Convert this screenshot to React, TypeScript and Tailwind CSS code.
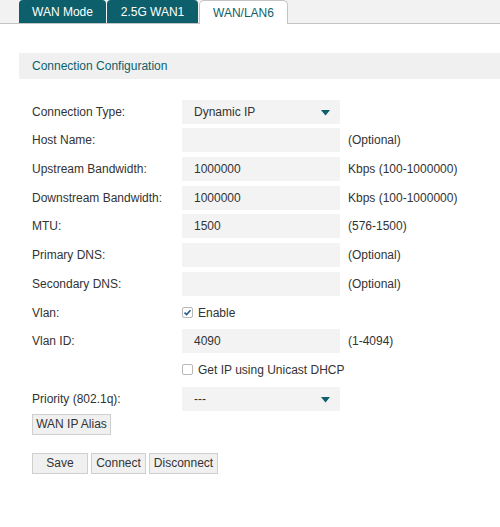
import React from "react";

const TEAL = "text-[#0d5f6b]";

function Arrow() {
  return (
    <svg width="9" height="6" viewBox="0 0 9 6" className="absolute right-[10px] top-[10px]">
      <path d="M0 0 H9 L4.5 5.5 Z" fill="#0d5f6b" />
    </svg>
  );
}

function Check({ checked }: { checked?: boolean }) {
  return (
    <span className="w-[11px] h-[11px] border border-[#b8b8b8] bg-white rounded-[2px] flex items-center justify-center">
      {checked && (
        <svg width="9" height="9" viewBox="0 0 9 9">
          <path d="M1.5 4.6 L3.6 6.6 L7.5 2.2" stroke="#2b5a8a" strokeWidth="1.6" fill="none" />
        </svg>
      )}
    </span>
  );
}

function Row({ label, children, note }: { label?: string; children?: React.ReactNode; note?: string }) {
  return (
    <div className="flex items-center h-[28.7px]">
      <div className="w-[150px] shrink-0">{label}</div>
      {children}
      {note && <div className="ml-[8px]">{note}</div>}
    </div>
  );
}

function Field({ value, select }: { value?: string; select?: boolean }) {
  return (
    <div className="relative w-[158px] h-[24px] bg-[#f3f3f3] flex items-center pl-[12px]">
      {value}
      {select && <Arrow />}
    </div>
  );
}

function Btn({ children, w }: { children: React.ReactNode; w: string }) {
  return (
    <button className={`${w} h-[21px] bg-[#f0f0f0] border border-[#cfcfcf] text-[#333] flex items-center justify-center`}>
      {children}
    </button>
  );
}

export default function App() {
  return (
    <div className="w-[500px] h-[527px] bg-white text-[12px] text-[#333]" style={{ fontFamily: '"Liberation Sans", Arial, sans-serif' }}>
      <div className="h-[24px] bg-[#f2f2f2] border-b border-[#c4c4c4] flex items-end pl-[19px]">
        <div className="w-[87px] h-[23px] bg-[#0d5f6b] text-white rounded-t-[4px] flex items-center justify-center">WAN Mode</div>
        <div className="w-[91px] h-[23px] ml-[1px] bg-[#0d5f6b] text-white rounded-t-[4px] flex items-center justify-center">2.5G WAN1</div>
        <div className={`w-[89px] h-[24px] ml-[1px] mb-[-1px] bg-white border border-b-0 border-[#c4c4c4] rounded-t-[5px] flex items-center justify-center ${TEAL}`}>WAN/LAN6</div>
      </div>

      <div className={`mt-[29px] ml-[19px] h-[26px] bg-[#f0f0f0] flex items-center pl-[13px] ${TEAL}`}>Connection Configuration</div>

      <div className="pl-[32px] mt-[18.4px]">
        <Row label="Connection Type:"><Field value="Dynamic IP" select /></Row>
        <Row label="Host Name:" note="(Optional)"><Field /></Row>
        <Row label="Upstream Bandwidth:" note="Kbps (100-1000000)"><Field value="1000000" /></Row>
        <Row label="Downstream Bandwidth:" note="Kbps (100-1000000)"><Field value="1000000" /></Row>
        <Row label="MTU:" note="(576-1500)"><Field value="1500" /></Row>
        <Row label="Primary DNS:" note="(Optional)"><Field /></Row>
        <Row label="Secondary DNS:" note="(Optional)"><Field /></Row>
        <Row label="Vlan:">
          <div className="flex items-center gap-[5px]"><Check checked /><span>Enable</span></div>
        </Row>
        <Row label="Vlan ID:" note="(1-4094)"><Field value="4090" /></Row>
        <Row>
          <div className="flex items-center gap-[5px]"><Check /><span>Get IP using Unicast DHCP</span></div>
        </Row>
        <Row label="Priority (802.1q):"><Field value="---" select /></Row>

        <div className="mt-[1px]">
          <Btn w="w-[79px]">WAN IP Alias</Btn>
        </div>
        <div className="mt-[18px] flex gap-[3px]">
          <Btn w="w-[56px]">Save</Btn>
          <Btn w="w-[55px]">Connect</Btn>
          <Btn w="w-[69px]">Disconnect</Btn>
        </div>
      </div>
    </div>
  );
}
